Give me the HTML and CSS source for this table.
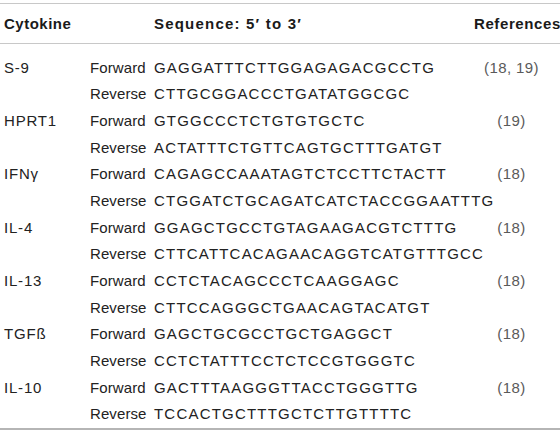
FILE: index.html
```html
<!DOCTYPE html>
<html>
<head>
<meta charset="utf-8">
<link rel="stylesheet" href="styles.css">
</head>
<body>
<table class="tbl">
  <thead>
    <tr>
      <th class="c1">Cytokine</th>
      <th class="c2"></th>
      <th class="c3">Sequence: 5′ to 3′</th>
      <th class="c4">References</th>
    </tr>
  </thead>
  <tbody>
    <tr class="first"><td class="c1">S-9</td><td class="c2">Forward</td><td class="c3">GAGGATTTCTTGGAGAGACGCCTG</td><td class="c4 ref">(18, 19)</td></tr>
    <tr><td class="c1"></td><td class="c2">Reverse</td><td class="c3">CTTGCGGACCCTGATATGGCGC</td><td class="c4"></td></tr>
    <tr><td class="c1">HPRT1</td><td class="c2">Forward</td><td class="c3">GTGGCCCTCTGTGTGCTC</td><td class="c4 ref">(19)</td></tr>
    <tr><td class="c1"></td><td class="c2">Reverse</td><td class="c3">ACTATTTCTGTTCAGTGCTTTGATGT</td><td class="c4"></td></tr>
    <tr><td class="c1">IFNγ</td><td class="c2">Forward</td><td class="c3">CAGAGCCAAATAGTCTCCTTCTACTT</td><td class="c4 ref">(18)</td></tr>
    <tr><td class="c1"></td><td class="c2">Reverse</td><td class="c3">CTGGATCTGCAGATCATCTACCGGAATTTG</td><td class="c4"></td></tr>
    <tr><td class="c1">IL-4</td><td class="c2">Forward</td><td class="c3">GGAGCTGCCTGTAGAAGACGTCTTTG</td><td class="c4 ref">(18)</td></tr>
    <tr><td class="c1"></td><td class="c2">Reverse</td><td class="c3">CTTCATTCACAGAACAGGTCATGTTTGCC</td><td class="c4"></td></tr>
    <tr><td class="c1">IL-13</td><td class="c2">Forward</td><td class="c3">CCTCTACAGCCCTCAAGGAGC</td><td class="c4 ref">(18)</td></tr>
    <tr><td class="c1"></td><td class="c2">Reverse</td><td class="c3">CTTCCAGGGCTGAACAGTACATGT</td><td class="c4"></td></tr>
    <tr><td class="c1">TGFß</td><td class="c2">Forward</td><td class="c3">GAGCTGCGCCTGCTGAGGCT</td><td class="c4 ref">(18)</td></tr>
    <tr><td class="c1"></td><td class="c2">Reverse</td><td class="c3">CCTCTATTTCCTCTCCGTGGGTC</td><td class="c4"></td></tr>
    <tr><td class="c1">IL-10</td><td class="c2">Forward</td><td class="c3">GACTTTAAGGGTTACCTGGGTTG</td><td class="c4 ref">(18)</td></tr>
    <tr class="last"><td class="c1"></td><td class="c2">Reverse</td><td class="c3">TCCACTGCTTTGCTCTTGTTTTC</td><td class="c4"></td></tr>
  </tbody>
</table>
</body>
</html>
```

FILE: styles.css
```css
html, body {
  margin: 0;
  padding: 0;
  background: #ffffff;
}
body {
  font-family: "Liberation Sans", Arial, sans-serif;
  font-size: 15px;
  color: #222222;
}
.tbl {
  margin-top: 3px;
  width: 560px;
  border-collapse: collapse;
  table-layout: fixed;
}
.tbl thead tr {
  border-top: 1px solid #c8c8c8;
  border-bottom: 1px solid #c8c8c8;
}
.tbl th {
  height: 39px;
  padding: 0;
  font-weight: bold;
  text-align: left;
  color: #1a1a1a;
  letter-spacing: 0.5px;
  vertical-align: middle;
  white-space: nowrap;
}
.tbl td {
  height: 26.67px;
  padding: 0;
  vertical-align: middle;
  white-space: nowrap;
}
.tbl tbody tr.first td {
  padding-top: 10px;
}
.tbl tbody tr.last td {
  padding-bottom: 1px;
}
.tbl tbody tr.last {
  border-bottom: 2px solid #b5b5b5;
}
.c1 { width: 86px; padding-left: 4px !important; }
.c2 { width: 64px; }
.c3 { width: 320px; }
.c4 { width: 86px; }
.tbl td.c1 { letter-spacing: 0.8px; }
.tbl td.c2 { letter-spacing: 0.1px; }
.tbl td.c3 { letter-spacing: 1.2px; }
.tbl th.c3 { letter-spacing: 1.2px; }
.tbl th.c4 { text-align: right; padding-right: 3px; letter-spacing: 0.6px; }
.tbl td.c4 { text-align: center; padding-right: 14px; letter-spacing: 0.4px; }
.ref { color: #5a5a5a; }
```
